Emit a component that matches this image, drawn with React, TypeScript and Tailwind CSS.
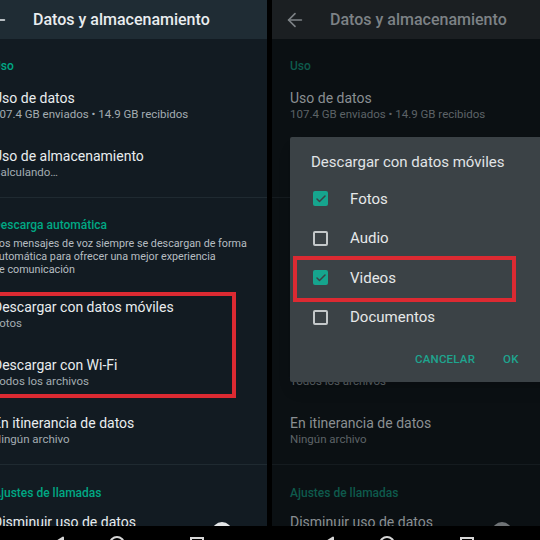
import React from 'react';
import { ArrowLeft, Check } from 'lucide-react';

type Tone = {
  header: string;
  body: string;
  title: string;
  text: string;
  sub: string;
  desc: string;
  accent: string;
  divider: string;
  thumb: string;
  track: string;
};

const BRIGHT: Tone = {
  header: 'bg-[#1f2c34]',
  body: 'bg-[#121b22]',
  title: 'text-[#e9edef]',
  text: 'text-[#e9edef]',
  sub: 'text-[#a3acb1]',
  desc: 'text-[#b6bdc1]',
  accent: 'text-[#00a884]',
  divider: 'bg-[#1f2a31]',
  thumb: 'bg-[#e4e6e7]',
  track: 'bg-[#3a4449]',
};

const DIM: Tone = {
  header: 'bg-[#1b1f22]',
  body: 'bg-[#0b1013]',
  title: 'text-[#7d8286]',
  text: 'text-[#8a8f92]',
  sub: 'text-[#5d6367]',
  desc: 'text-[#5d6367]',
  accent: 'text-[#0e5a4c]',
  divider: 'bg-[#151b1f]',
  thumb: 'bg-[#6f7376]',
  track: 'bg-[#1d2326]',
};

const Item = ({ title, sub, t }: { title: string; sub: string; t: Tone }) => (
  <div className="h-[58px] flex flex-col justify-center pl-[18px]">
    <div className={`text-[14px] leading-[18px] ${t.text}`}>{title}</div>
    <div className={`text-[11.5px] leading-[15px] ${t.sub}`}>{sub}</div>
  </div>
);

const Panel = ({
  dim,
  className,
  toggleClass,
  children,
}: {
  dim?: boolean;
  className: string;
  toggleClass: string;
  children?: React.ReactNode;
}) => {
  const t = dim ? DIM : BRIGHT;
  return (
    <div className={`relative w-[292px] h-full shrink-0 overflow-hidden ${t.body} ${className}`}>
      <div className={`h-[39px] flex items-center ${t.header}`}>
        <ArrowLeft size={22} strokeWidth={1.8} className={`ml-[12px] ${t.title}`} />
        <span className={`ml-[24px] text-[16px] font-medium ${t.title}`}>Datos y almacenamiento</span>
      </div>

      <div className={`h-[37px] pt-[19px] pl-[18px] text-[12px] leading-[16px] font-medium ${t.accent}`}>Uso</div>
      <Item t={t} title="Uso de datos" sub="107.4 GB enviados • 14.9 GB recibidos" />
      <Item t={t} title="Uso de almacenamiento" sub="Calculando…" />
      <div className={`mt-[5px] h-px ${t.divider}`} />

      <div className={`pt-[19px] pl-[18px] text-[12px] leading-[16px] font-medium ${t.accent}`}>Descarga automática</div>
      <p className={`mt-[4px] pl-[18px] text-[10.75px] leading-[13px] ${t.desc}`}>
        Los mensajes de voz siempre se descargan de forma
        <br />
        automática para ofrecer una mejor experiencia
        <br />
        de comunicación
      </p>
      <div className="h-[9px]" />
      <Item t={t} title="Descargar con datos móviles" sub="Fotos" />
      <Item t={t} title="Descargar con Wi-Fi" sub="Todos los archivos" />
      <Item t={t} title="En itinerancia de datos" sub="Ningún archivo" />
      <div className={`mt-[5px] h-px ${t.divider}`} />

      <div className={`pt-[20px] pl-[18px] text-[12px] leading-[16px] font-medium ${t.accent}`}>Ajustes de llamadas</div>
      <div className="h-[58px] flex items-start pt-[12px] pl-[18px]">
        <span className={`text-[14px] leading-[18px] ${t.text}`}>Disminuir uso de datos</span>
        <div className={`relative ml-auto mt-[9px] w-[36px] h-[20px] ${toggleClass}`}>
          <div className={`absolute left-[2px] top-[4px] w-[34px] h-[14px] rounded-full ${t.track}`} />
          <div className={`absolute left-0 top-0 w-[20px] h-[20px] rounded-full ${t.thumb}`} />
        </div>
      </div>

      {children}
    </div>
  );
};

const Box = ({ checked }: { checked: boolean }) =>
  checked ? (
    <div className="w-[15px] h-[15px] rounded-[2px] bg-[#16a58e] flex items-center justify-center">
      <Check size={12} strokeWidth={3} className="text-[#3b4246]" />
    </div>
  ) : (
    <div className="w-[15px] h-[15px] rounded-[2px] border-2 border-[#c4c8ca]" />
  );

const options: [string, boolean][] = [
  ['Fotos', true],
  ['Audio', false],
  ['Videos', true],
  ['Documentos', false],
];

const NavIcons = () => (
  <div className="flex items-start">
    <svg width="16" height="16" viewBox="0 0 16 16" className="ml-[50px] mt-[10px]">
      <path d="M3 8 L13 1.5 L13 14.5 Z" fill="none" stroke="#d6d6d6" strokeWidth="2" strokeLinejoin="round" />
    </svg>
    <svg width="16" height="16" viewBox="0 0 16 16" className="ml-[43px] mt-[10px]">
      <circle cx="8" cy="8" r="7" fill="none" stroke="#d6d6d6" strokeWidth="2" />
    </svg>
    <svg width="14" height="14" viewBox="0 0 14 14" className="ml-[65px] mt-[11px]">
      <rect x="1" y="1" width="12" height="12" fill="none" stroke="#d6d6d6" strokeWidth="2" />
    </svg>
  </div>
);

export default function App() {
  return (
    <div className="w-[540px] h-[540px] bg-black overflow-hidden flex flex-col" style={{ fontFamily: 'Roboto, "Noto Sans", sans-serif' }}>
      <div className="h-[526px] flex gap-[5px]">
        <Panel className="ml-[-25px]" toggleClass="mr-[19px]">
          <div className="absolute left-[10px] top-[292px] w-[251px] h-[106px] border-4 border-[#dc2a32]" />
        </Panel>

        <Panel dim className="" toggleClass="mr-[36px]">
          <div className="absolute left-[18px] top-[137px] w-[272px] h-[245px] bg-[#3b4246] rounded-[2px] shadow-lg">
            <div className="pt-[15px] pl-[21px] text-[15px] leading-[20px] text-[#e1e4e6]">Descargar con datos móviles</div>
            <div className="mt-[7px]">
              {options.map(([label, checked]) => (
                <div key={label} className="h-[39.5px] flex items-center">
                  <div className="ml-[23px]">
                    <Box checked={checked} />
                  </div>
                  <span className="ml-[22px] text-[15px] text-[#e6e8e9]">{label}</span>
                </div>
              ))}
            </div>
            <div className="h-[45px] flex items-center pl-[125px] gap-[28px] text-[11.5px] font-medium tracking-[0.2px] text-[#1ea58f]">
              <span>CANCELAR</span>
              <span>OK</span>
            </div>
            <div className="absolute left-[3px] top-[119px] w-[223px] h-[46px] border-4 border-[#dc2a32]" />
          </div>
        </Panel>
      </div>
      <div className="h-[14px] bg-black flex overflow-hidden">
        <div className="w-[270px] shrink-0">
          <NavIcons />
        </div>
        <div className="w-[270px] shrink-0">
          <NavIcons />
        </div>
      </div>
    </div>
  );
}
